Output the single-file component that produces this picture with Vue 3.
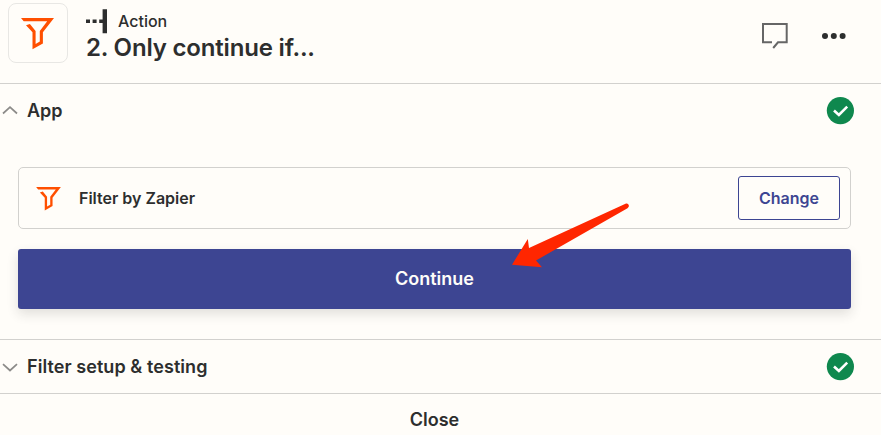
<script setup>
const funnel = 'M0 0H33L21.9 14.2V25.4L11.5 31.2V14.3L5 7.2L8.9 6.1L14.6 12.9V26.1L18.8 23.6V12.9L26.2 3.2H2.7Z'
</script>

<template>
  <main class="panel">
    <header class="header">
      <div class="logo">
        <svg width="33" height="32" viewBox="0 0 33 32"><path :d="funnel" fill="#ff4f00" /></svg>
      </div>
      <div class="heading">
        <div class="kind">
          <svg width="22" height="26" viewBox="0 0 22 26" fill="#2d2e2e">
            <path d="M0 11.6h4v3.4H0zM6.6 11.6h4v3.4h-4zM13.2 11.6H17v3.4h-3.8zM16.6 1.2h4.4v24h-4.4z" />
          </svg>
          <span>Action</span>
        </div>
        <h1>2. Only continue if...</h1>
      </div>
      <svg class="note" width="28" height="28" viewBox="0 0 28 28" fill="none" stroke="#666" stroke-width="2">
        <path d="M11 20.3H2V2H25.7V20.3H17L12.2 26" />
      </svg>
      <svg class="more" width="26" height="8" viewBox="0 0 26 8" fill="#2d2e2e">
        <circle cx="4" cy="4" r="3" /><circle cx="12.8" cy="4" r="3" /><circle cx="21.6" cy="4" r="3" />
      </svg>
    </header>

    <section class="section">
      <div class="row">
        <svg class="chevron" width="16" height="10" viewBox="0 0 16 10" fill="none" stroke="#8c8b89" stroke-width="1.7">
          <path d="M1 7.5L8 1.2L15 7.5" />
        </svg>
        <h2>App</h2>
        <svg class="check" width="28" height="28" viewBox="0 0 28 28">
          <circle cx="14.4" cy="13.6" r="13.6" fill="#0f884e" />
          <path d="M8 13.5L12.9 18L21.2 9.7" fill="none" stroke="#fff" stroke-width="2.6" />
        </svg>
      </div>
      <div class="body">
        <div class="card">
          <svg class="app-icon" width="25" height="24" viewBox="0 0 33 32"><path :d="funnel" fill="#ff4f00" /></svg>
          <span class="name">Filter by Zapier</span>
          <button class="change">Change</button>
        </div>
        <button class="continue">
          Continue
          <svg class="arrow" width="120" height="66" viewBox="0 0 120 66" fill="#ff2600">
            <path d="M2 62.7L17.8 37L19 46L115.5 1.7C118.4 .5 120.3 4.2 117.5 6.2L26 58.5L32 65.2Z" />
          </svg>
        </button>
      </div>
    </section>

    <section class="section">
      <div class="row setup">
        <svg class="chevron" width="16" height="10" viewBox="0 0 16 10" fill="none" stroke="#8c8b89" stroke-width="1.7">
          <path d="M1 2.2L8 8.5L15 2.2" />
        </svg>
        <h2 class="wide">Filter setup &amp; testing</h2>
        <svg class="check" width="28" height="28" viewBox="0 0 28 28">
          <circle cx="14.4" cy="13.6" r="13.6" fill="#0f884e" />
          <path d="M8 13.5L12.9 18L21.2 9.7" fill="none" stroke="#fff" stroke-width="2.6" />
        </svg>
      </div>
    </section>
    <button class="close">Close</button>
  </main>
</template>

<style>
body { background: #fffdf9; overflow: hidden; }
</style>
<style scoped>
.panel {
  box-sizing: border-box;
  height: 435px;
  overflow: hidden;
  display: flex;
  flex-direction: column;
  background: #fffdf9;
  color: #2d2e2e;
  font-family: Inter, sans-serif;
}
svg { display: block; flex: none; }
h1, h2 { margin: 0; font-weight: 600; white-space: nowrap; }
button { font-family: inherit; font-weight: 600; padding: 0; margin: 0; }
.header {
  box-sizing: border-box;
  height: 84px;
  flex: none;
  display: flex;
  align-items: flex-start;
  padding: 3px 34px 0 8px;
  border-bottom: 1px solid #d2d1ce;
}
.logo {
  box-sizing: border-box;
  width: 60px;
  height: 60px;
  display: flex;
  align-items: center;
  justify-content: center;
  padding: 2px 1px 0 0;
  border: 1px solid #e8e7e4;
  border-radius: 8px;
}
.heading { flex: 1; padding: 5px 0 0 18px; }
.kind {
  display: flex;
  align-items: center;
  gap: 10px;
  height: 26px;
  font-size: 16px;
  line-height: 26px;
  font-weight: 500;
}
h1 { font-size: 24px; line-height: 28px; letter-spacing: -0.18px; }
.note { margin-top: 19px; }
.more { margin: 29px 0 0 32px; }
.section { flex: none; border-bottom: 1px solid #d2d1ce; }
.row {
  height: 54px;
  display: flex;
  align-items: center;
  padding: 0 27px 0 2px;
}
.row.setup { height: 53px; }
h2 { flex: 1; margin-left: 9px; font-size: 18px; line-height: 24px; }
h2.wide { letter-spacing: 0.07px; }
.body {
  display: flex;
  flex-direction: column;
  gap: 20px;
  padding: 29px 30px 30px 18px;
}
.card {
  box-sizing: border-box;
  height: 62px;
  display: flex;
  align-items: center;
  padding: 0 10px 0 17px;
  border: 1px solid #d2d1ce;
  border-radius: 5px;
}
.app-icon { margin-top: 1px; }
.name { flex: 1; margin-left: 18px; font-size: 16px; font-weight: 600; }
.change {
  width: 102px;
  height: 44px;
  border: 1px solid #3d4592;
  border-radius: 3px;
  background: #fffdf9;
  color: #3d4592;
  font-size: 16px;
}
.continue {
  position: relative;
  height: 60px;
  padding-bottom: 2px;
  border: 0;
  border-radius: 3px;
  background: #3d4592;
  color: #fffdf9;
  font-size: 18px;
  box-shadow: 0 5px 12px rgba(45, 46, 46, 0.14);
}
.arrow { position: absolute; left: 492px; top: -47px; }
.close {
  height: 50px;
  flex: none;
  padding-right: 12px;
  border: 0;
  background: transparent;
  color: #2d2e2e;
  font-size: 18px;
}
</style>
